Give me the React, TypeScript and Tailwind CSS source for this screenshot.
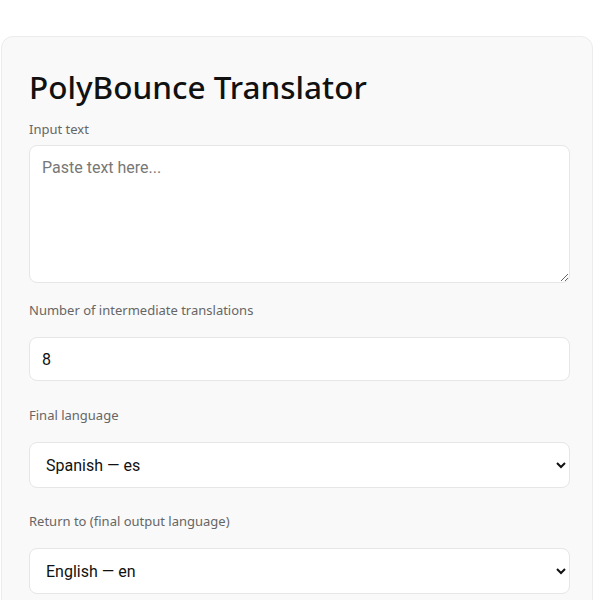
import { useState } from 'react';

const languages = [
  { code: 'en', name: 'English' },
  { code: 'es', name: 'Spanish' },
  { code: 'fr', name: 'French' },
  { code: 'de', name: 'German' },
  { code: 'it', name: 'Italian' },
  { code: 'ja', name: 'Japanese' },
];

const fieldFont = { fontFamily: 'Roboto, sans-serif' };

export default function App() {
  const [text, setText] = useState('');
  const [count, setCount] = useState(8);
  const [finalLang, setFinalLang] = useState('es');
  const [returnLang, setReturnLang] = useState('en');

  return (
    <div className="min-h-screen bg-white pt-[36px]">
      <div
        className="ml-px w-[592px] rounded-xl border border-[#ececec] bg-[#f9f9f9] pl-[27px] pt-[30px] pb-8"
        style={{ fontFamily: '"Noto Sans", sans-serif' }}
      >
        <h1 className="text-[31.5px] font-medium leading-[40px] text-[#111]">PolyBounce Translator</h1>

        <label className="mt-[12px] block text-[13px] leading-5 text-[#666]">Input text</label>
        <textarea
          value={text}
          onChange={(e) => setText(e.target.value)}
          placeholder="Paste text here..."
          className="mt-[6px] block h-[138px] w-[541px] rounded-lg border border-[#e6e6e6] bg-white px-3 py-[10px] text-base text-[#111] placeholder:text-[#777] outline-none"
          style={fieldFont}
        />

        <label className="mt-[17px] block text-[13px] leading-5 text-[#666]">Number of intermediate translations</label>
        <input
          type="number"
          value={count}
          onChange={(e) => setCount(Number(e.target.value))}
          className="mt-[17px] block h-[44px] w-[541px] rounded-lg border border-[#e6e6e6] bg-white px-3 text-base text-[#111] outline-none"
          style={fieldFont}
        />

        <label className="mt-[24px] block text-[13px] leading-5 text-[#666]">Final language</label>
        <select
          value={finalLang}
          onChange={(e) => setFinalLang(e.target.value)}
          className="mt-[17px] block h-[46px] w-[541px] rounded-lg border border-[#e6e6e6] bg-white px-3 text-base text-[#111] outline-none"
          style={fieldFont}
        >
          {languages.map((l) => (
            <option key={l.code} value={l.code}>
              {l.name} — {l.code}
            </option>
          ))}
        </select>

        <label className="mt-[23px] block text-[13px] leading-5 text-[#666]">Return to (final output language)</label>
        <select
          value={returnLang}
          onChange={(e) => setReturnLang(e.target.value)}
          className="mt-[17px] block h-[46px] w-[541px] rounded-lg border border-[#e6e6e6] bg-white px-3 text-base text-[#111] outline-none"
          style={fieldFont}
        >
          {languages.map((l) => (
            <option key={l.code} value={l.code}>
              {l.name} — {l.code}
            </option>
          ))}
        </select>
      </div>
    </div>
  );
}
